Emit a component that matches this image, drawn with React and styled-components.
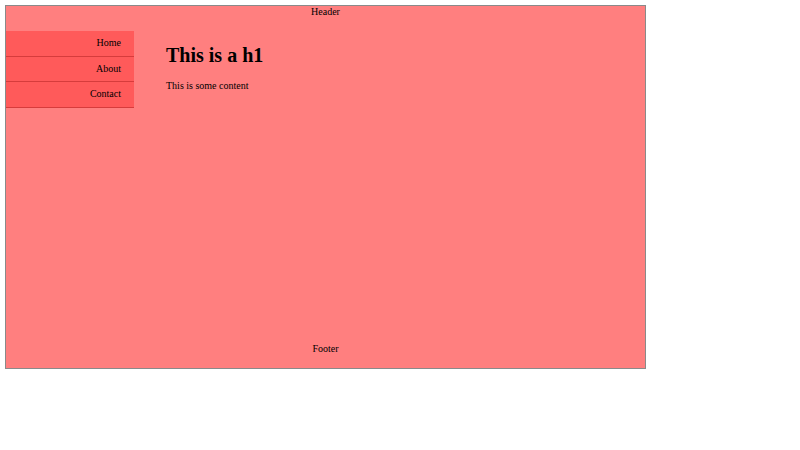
import React from 'react';
import styled, { createGlobalStyle } from 'styled-components';

const GlobalStyle = createGlobalStyle`
  body {
    margin: 5px;
    font-family: "Liberation Serif", "Times New Roman", serif;
    font-size: 10px;
    color: #000;
    background: #fff;
  }
`;

const Page = styled.div`
  width: 639px;
  height: 362px;
  border: 1px solid #8a8a8a;
  background: #ff7f7f;
  display: grid;
  grid-template-rows: 25px 1fr 25px;
`;

const Header = styled.header`
  text-align: center;
  line-height: 11px;
`;

const Footer = styled.footer`
  text-align: center;
  line-height: 11px;
`;

const Main = styled.div`
  display: flex;
  align-items: flex-start;
`;

const Nav = styled.nav`
  width: 128px;
  flex-shrink: 0;
`;

const NavItem = styled.a`
  display: block;
  height: 24.6px;
  line-height: 24.6px;
  padding-right: 13px;
  text-align: right;
  background: #ff5a5a;
  border-bottom: 1px solid #d63c3c;
  color: #000;
  text-decoration: none;
`;

const Content = styled.section`
  padding-left: 32px;
`;

const Title = styled.h1`
  font-size: 20px;
  line-height: 23px;
  margin: 13px 0;
`;

const Text = styled.p`
  margin: 0;
  line-height: 11px;
`;

export default function App() {
  return (
    <>
      <GlobalStyle />
      <Page>
        <Header>Header</Header>
        <Main>
          <Nav>
            <NavItem href="#">Home</NavItem>
            <NavItem href="#">About</NavItem>
            <NavItem href="#">Contact</NavItem>
          </Nav>
          <Content>
            <Title>This is a h1</Title>
            <Text>This is some content</Text>
          </Content>
        </Main>
        <Footer>Footer</Footer>
      </Page>
    </>
  );
}
